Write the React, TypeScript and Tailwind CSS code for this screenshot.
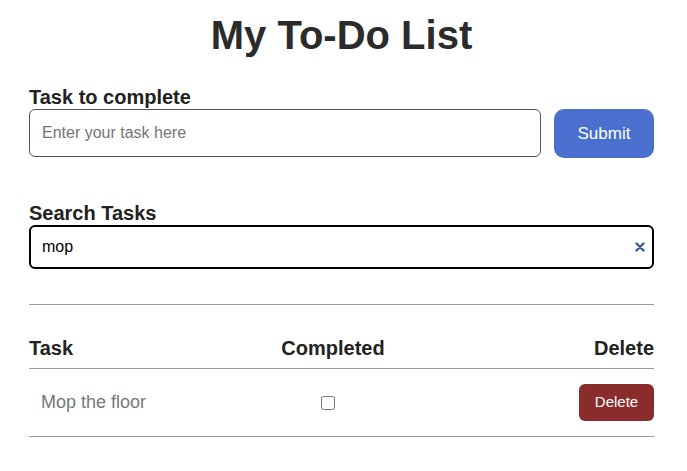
import { useState } from 'react';

interface Task {
  id: number;
  text: string;
  done: boolean;
}

export default function App() {
  const [tasks, setTasks] = useState<Task[]>([
    { id: 1, text: 'Mop the floor', done: false },
    { id: 2, text: 'Buy groceries', done: false },
  ]);
  const [draft, setDraft] = useState('');
  const [query, setQuery] = useState('mop');

  const shown = tasks.filter((t) => t.text.toLowerCase().includes(query.toLowerCase()));

  const addTask = () => {
    if (!draft.trim()) return;
    setTasks([...tasks, { id: Date.now(), text: draft.trim(), done: false }]);
    setDraft('');
  };

  return (
    <div className="min-h-screen bg-white font-['Liberation_Sans',Arial,sans-serif] text-[#222]">
      <div className="ml-[29px] w-[625px] pt-[12px]">
        <h1 className="text-center text-[40px] font-bold leading-[46px] text-[#2b2b2b]">My To-Do List</h1>

        {/* add task */}
        <label className="mt-[28px] block text-[20px] font-bold leading-[23px]">Task to complete</label>
        <div className="flex gap-[13px]">
          <input
            value={draft}
            onChange={(e) => setDraft(e.target.value)}
            placeholder="Enter your task here"
            className="h-[48px] flex-1 rounded-[6px] border border-[#555] px-[12px] text-[16px] text-[#222] outline-none placeholder:text-[#757575]"
          />
          <button
            onClick={addTask}
            className="h-[49px] w-[100px] rounded-[10px] bg-[#4a6fcf] text-[17px] text-white">
            Submit
          </button>
        </div>

        {/* search */}
        <label className="mt-[44px] block text-[20px] font-bold leading-[23px]">Search Tasks</label>
        <div className="relative">
          <input
            value={query}
            onChange={(e) => setQuery(e.target.value)}
            className="h-[44px] w-full rounded-[6px] border-2 border-black px-[11px] text-[16px] text-black outline-none"
          />
          {query && (
            <button
              onClick={() => setQuery('')}
              className="absolute right-[9px] top-1/2 -translate-y-1/2 text-[#3b5a9a]">
              <svg className="h-[10px] w-[10px]" viewBox="0 0 10 10" stroke="currentColor" strokeWidth={2.4} strokeLinecap="round">
                <path d="M1.5 1.5l7 7M8.5 1.5l-7 7" />
              </svg>
            </button>
          )}
        </div>

        <hr className="mt-[35px] border-t border-[#999]" />

        {/* table */}
        <div className="mt-[32px] grid grid-cols-[224px_160px_1fr] border-b border-[#999] pb-[8px] text-[20px] font-bold leading-[23px]">
          <div>Task</div>
          <div className="text-center">Completed</div>
          <div className="text-right">Delete</div>
        </div>
        {shown.map((t) => (
          <div key={t.id} className="grid h-[68px] grid-cols-[224px_160px_1fr] items-center border-b border-[#999]">
            <div className={`pl-[12px] text-[18px] text-[#777] ${t.done ? 'line-through' : ''}`}>{t.text}</div>
            <div className="flex justify-center pr-[10px]">
              <input
                type="checkbox"
                checked={t.done}
                onChange={() => setTasks(tasks.map((x) => (x.id === t.id ? { ...x, done: !x.done } : x)))}
                className="h-[14px] w-[14px]"
              />
            </div>
            <div className="flex justify-end">
              <button
                onClick={() => setTasks(tasks.filter((x) => x.id !== t.id))}
                className="h-[37px] w-[75px] rounded-[6px] bg-[#8b2c2c] text-[15px] text-white">
                Delete
              </button>
            </div>
          </div>
        ))}
      </div>
    </div>
  );
}
